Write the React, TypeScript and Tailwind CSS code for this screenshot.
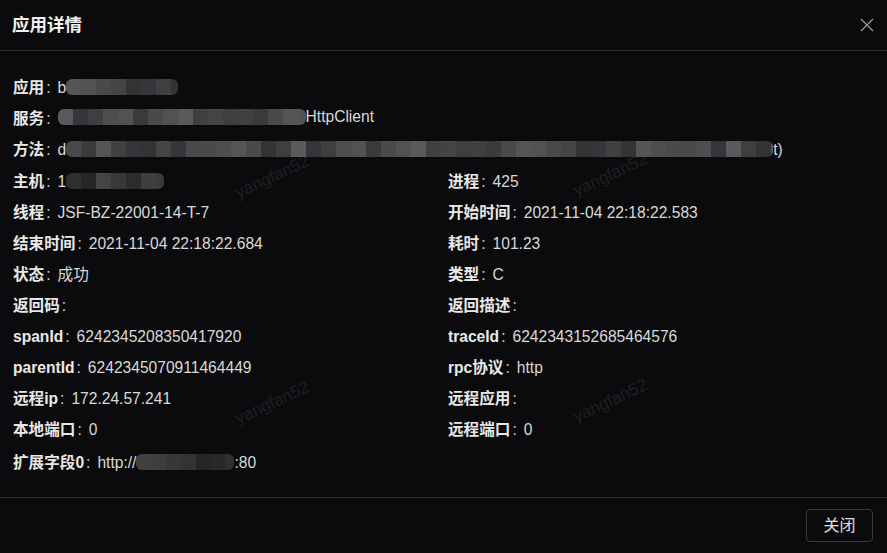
import React from "react";

const shades = ["#3f3f42", "#4a4a4d", "#36363a", "#555558", "#444447", "#3b3b3e", "#5a5a5d", "#4e4e51", "#333336", "#49494c", "#404043", "#525255"];

function Mosaic({ width, seed = 0, dark = false }: { width: number; seed?: number; dark?: boolean }) {
  const cell = 15;
  const n = Math.ceil(width / cell);
  const cells = Array.from({ length: n }, (_, i) => {
    const c = shades[(i * 7 + seed * 3 + ((i * i) % 5)) % shades.length];
    return c;
  });
  return (
    <span className="inline-flex h-[16px] overflow-hidden rounded-[6px] align-middle" style={{ width }}>
      {cells.map((c, i) => (
        <span
          key={i}
          className="h-full shrink-0"
          style={{ width: cell, background: c, filter: dark ? "brightness(0.75)" : undefined }}
        />
      ))}
    </span>
  );
}

function Row({ label, children }: { label: string; children?: React.ReactNode }) {
  return (
    <div className="flex h-[31px] items-center whitespace-nowrap">
      <span className="font-bold text-[#e8e8e8]">{label}</span>
      <span className="ml-[2px] mr-[7px] text-[#d6d6d6]">:</span>
      <span className="text-[#d9d9d9]">{children}</span>
    </div>
  );
}

function Watermark({ x, y }: { x: number; y: number }) {
  return (
    <span
      className="pointer-events-none absolute select-none text-[17px] text-[#1f1f23] whitespace-nowrap"
      style={{ left: x, top: y, transform: "rotate(-25deg)", transformOrigin: "left top" }}
    >
      yangfan52
    </span>
  );
}

export default function App() {
  return (
    <div
      className="relative h-[553px] w-[887px] overflow-hidden bg-[#0b0b0d] text-[15.6px]"
      style={{ fontFamily: '"Liberation Sans", Arial, "Noto Sans CJK SC", sans-serif' }}
    >
      <Watermark x={231} y={182} />
      <Watermark x={569} y={180} />
      <Watermark x={231} y={408} />
      <Watermark x={569} y={406} />

      <div className="flex h-[51px] items-center justify-between border-b border-[#2e2e31] pl-[12px] pr-[13px]">
        <span className="text-[17.5px] font-bold text-[#f0f0f0]">应用详情</span>
        <svg width="14" height="14" viewBox="0 0 14 14">
          <path d="M1 1L13 13M13 1L1 13" stroke="#9a9a9a" strokeWidth="1.3" />
        </svg>
      </div>

      <div className="relative px-[13px] pt-[21px] pb-[18px]">
        <Row label="应用">
          <span className="inline-flex items-center">
            b<Mosaic width={112} seed={1} />
          </span>
        </Row>
        <Row label="服务">
          <span className="inline-flex items-center">
            <Mosaic width={248} seed={2} />
            HttpClient
          </span>
        </Row>
        <Row label="方法">
          <span className="inline-flex items-center">
            d<Mosaic width={707} seed={3} />
            t)
          </span>
        </Row>
        <div className="mt-[1px] grid grid-cols-[435px_1fr]">
          <Row label="主机">
            <span className="inline-flex items-center">
              1<Mosaic width={98} seed={4} dark />
            </span>
          </Row>
          <Row label="进程">425</Row>
          <Row label="线程">JSF-BZ-22001-14-T-7</Row>
          <Row label="开始时间">2021-11-04 22:18:22.583</Row>
          <Row label="结束时间">2021-11-04 22:18:22.684</Row>
          <Row label="耗时">101.23</Row>
          <Row label="状态">成功</Row>
          <Row label="类型">C</Row>
          <Row label="返回码"></Row>
          <Row label="返回描述"></Row>
          <Row label="spanId">6242345208350417920</Row>
          <Row label="traceId">6242343152685464576</Row>
          <Row label="parentId">6242345070911464449</Row>
          <Row label="rpc协议">http</Row>
          <Row label="远程ip">172.24.57.241</Row>
          <Row label="远程应用"></Row>
          <Row label="本地端口">0</Row>
          <Row label="远程端口">0</Row>
        </div>
        <div className="mt-[2px]">
          <Row label="扩展字段0">
            <span className="inline-flex items-center">
              http://<Mosaic width={98} seed={5} dark />:80
            </span>
          </Row>
        </div>
      </div>

      <div className="absolute bottom-0 left-0 right-0 flex h-[56px] items-center justify-end border-t border-[#2e2e31] pr-[14px]">
        <button className="h-[33px] w-[67px] rounded-[4px] border border-[#3a3a3d] bg-transparent text-[16px] text-[#e0e0e0]">
          关闭
        </button>
      </div>
    </div>
  );
}
